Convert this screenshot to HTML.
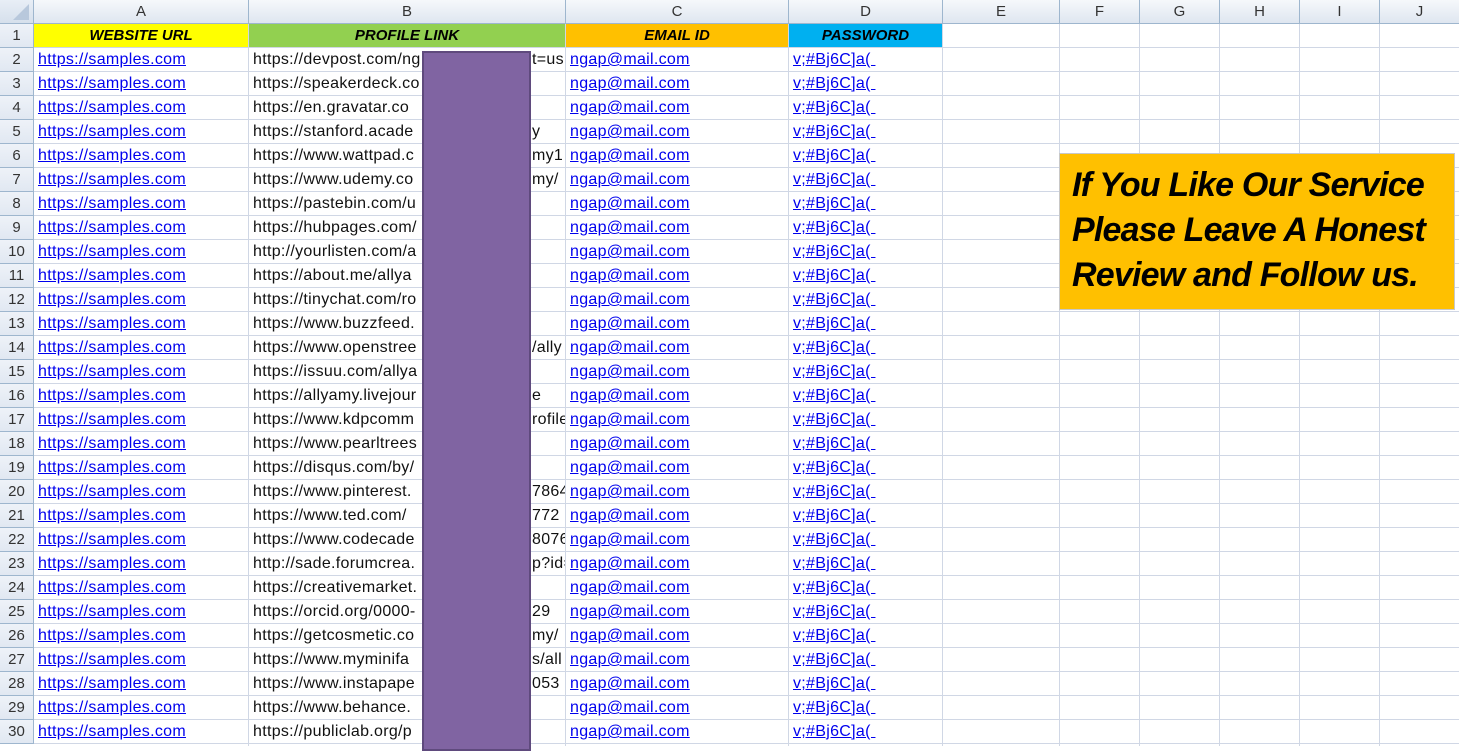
<!DOCTYPE html>
<html><head><meta charset="utf-8"><style>
*{margin:0;padding:0;box-sizing:border-box}
body{width:1459px;height:746px;overflow:hidden;background:#fff;position:relative;font-family:"Liberation Sans",sans-serif}
.grid{position:absolute;left:34px;top:24px;width:1425px;height:722px;
background-image:repeating-linear-gradient(to bottom,transparent 0 23px,#d0d7e5 23px 24px);}
.v{position:absolute;top:24px;height:722px;width:1px;background:#d0d7e5}
.hdr{position:absolute;top:0;height:24px;background:linear-gradient(#f6f8fb,#dfe6f0);border-right:1px solid #9eb6ce;border-bottom:1px solid #9eb6ce;color:#333;font-size:15px;line-height:23px;text-align:center}
.rn{position:absolute;left:0;width:34px;height:24px;background:linear-gradient(#eef2f8,#e1e8f2);border-right:1px solid #9eb6ce;border-bottom:1px solid #9eb6ce;color:#333;font-size:15px;line-height:23px;text-align:center}
.r{position:absolute;left:0;width:1459px;height:24px;font-size:16px;letter-spacing:.3px;line-height:24px;white-space:nowrap}
.r span{position:absolute}
.a{left:38px;color:#0000ee;text-decoration:underline}
.b{left:253px;color:#111}
.br{left:532px;color:#111;width:33px;overflow:hidden}
.c{left:570px;color:#0000ee;text-decoration:underline}
.d{left:793px;color:#0000ee;text-decoration:underline}
.h1{position:absolute;top:24px;height:23px;font-weight:bold;font-style:italic;font-size:15px;line-height:24px;text-align:center;color:#000}
</style></head><body>
<div class="grid"></div>
<div class="v" style="left:248px"></div><div class="v" style="left:565px"></div><div class="v" style="left:788px"></div><div class="v" style="left:942px"></div><div class="v" style="left:1059px"></div><div class="v" style="left:1139px"></div><div class="v" style="left:1219px"></div><div class="v" style="left:1299px"></div><div class="v" style="left:1379px"></div>
<div class="hdr" style="left:0;width:34px;background:linear-gradient(#e8eef6,#d6e0ec)"><svg width="33" height="23"><polygon points="29,4 29,20 13,20" fill="#b8c8dc"/></svg></div>
<div class="hdr" style="left:34px;width:215px">A</div>
<div class="hdr" style="left:249px;width:317px">B</div>
<div class="hdr" style="left:566px;width:223px">C</div>
<div class="hdr" style="left:789px;width:154px">D</div>
<div class="hdr" style="left:943px;width:117px">E</div>
<div class="hdr" style="left:1060px;width:80px">F</div>
<div class="hdr" style="left:1140px;width:80px">G</div>
<div class="hdr" style="left:1220px;width:80px">H</div>
<div class="hdr" style="left:1300px;width:80px">I</div>
<div class="hdr" style="left:1380px;width:80px">J</div>
<div class="h1" style="left:34px;width:214px;background:#ffff00">WEBSITE URL</div>
<div class="h1" style="left:249px;width:316px;background:#92d050">PROFILE LINK</div>
<div class="h1" style="left:566px;width:222px;background:#ffc000">EMAIL ID</div>
<div class="h1" style="left:789px;width:153px;background:#00b0f0">PASSWORD</div>

<div class="rn" style="top:24px">1</div><div class="rn" style="top:48px">2</div><div class="rn" style="top:72px">3</div><div class="rn" style="top:96px">4</div><div class="rn" style="top:120px">5</div><div class="rn" style="top:144px">6</div><div class="rn" style="top:168px">7</div><div class="rn" style="top:192px">8</div><div class="rn" style="top:216px">9</div><div class="rn" style="top:240px">10</div><div class="rn" style="top:264px">11</div><div class="rn" style="top:288px">12</div><div class="rn" style="top:312px">13</div><div class="rn" style="top:336px">14</div><div class="rn" style="top:360px">15</div><div class="rn" style="top:384px">16</div><div class="rn" style="top:408px">17</div><div class="rn" style="top:432px">18</div><div class="rn" style="top:456px">19</div><div class="rn" style="top:480px">20</div><div class="rn" style="top:504px">21</div><div class="rn" style="top:528px">22</div><div class="rn" style="top:552px">23</div><div class="rn" style="top:576px">24</div><div class="rn" style="top:600px">25</div><div class="rn" style="top:624px">26</div><div class="rn" style="top:648px">27</div><div class="rn" style="top:672px">28</div><div class="rn" style="top:696px">29</div><div class="rn" style="top:720px">30</div>

<div class="r" style="top:48px"><span class="a">https://samples.com</span><span class="b">https://devpost.com/ng</span><span class="br">t=us</span><span class="c">ngap@mail.com</span><span class="d">v;#Bj6C]a(&nbsp;</span></div>
<div class="r" style="top:72px"><span class="a">https://samples.com</span><span class="b">https://speakerdeck.co</span><span class="c">ngap@mail.com</span><span class="d">v;#Bj6C]a(&nbsp;</span></div>
<div class="r" style="top:96px"><span class="a">https://samples.com</span><span class="b">https://en.gravatar.co</span><span class="c">ngap@mail.com</span><span class="d">v;#Bj6C]a(&nbsp;</span></div>
<div class="r" style="top:120px"><span class="a">https://samples.com</span><span class="b">https://stanford.acade</span><span class="br">y</span><span class="c">ngap@mail.com</span><span class="d">v;#Bj6C]a(&nbsp;</span></div>
<div class="r" style="top:144px"><span class="a">https://samples.com</span><span class="b">https://www.wattpad.c</span><span class="br">my1</span><span class="c">ngap@mail.com</span><span class="d">v;#Bj6C]a(&nbsp;</span></div>
<div class="r" style="top:168px"><span class="a">https://samples.com</span><span class="b">https://www.udemy.co</span><span class="br">my/</span><span class="c">ngap@mail.com</span><span class="d">v;#Bj6C]a(&nbsp;</span></div>
<div class="r" style="top:192px"><span class="a">https://samples.com</span><span class="b">https://pastebin.com/u</span><span class="c">ngap@mail.com</span><span class="d">v;#Bj6C]a(&nbsp;</span></div>
<div class="r" style="top:216px"><span class="a">https://samples.com</span><span class="b">https://hubpages.com/</span><span class="c">ngap@mail.com</span><span class="d">v;#Bj6C]a(&nbsp;</span></div>
<div class="r" style="top:240px"><span class="a">https://samples.com</span><span class="b">http://yourlisten.com/a</span><span class="c">ngap@mail.com</span><span class="d">v;#Bj6C]a(&nbsp;</span></div>
<div class="r" style="top:264px"><span class="a">https://samples.com</span><span class="b">https://about.me/allya</span><span class="c">ngap@mail.com</span><span class="d">v;#Bj6C]a(&nbsp;</span></div>
<div class="r" style="top:288px"><span class="a">https://samples.com</span><span class="b">https://tinychat.com/ro</span><span class="c">ngap@mail.com</span><span class="d">v;#Bj6C]a(&nbsp;</span></div>
<div class="r" style="top:312px"><span class="a">https://samples.com</span><span class="b">https://www.buzzfeed.</span><span class="c">ngap@mail.com</span><span class="d">v;#Bj6C]a(&nbsp;</span></div>
<div class="r" style="top:336px"><span class="a">https://samples.com</span><span class="b">https://www.openstree</span><span class="br">/ally</span><span class="c">ngap@mail.com</span><span class="d">v;#Bj6C]a(&nbsp;</span></div>
<div class="r" style="top:360px"><span class="a">https://samples.com</span><span class="b">https://issuu.com/allya</span><span class="c">ngap@mail.com</span><span class="d">v;#Bj6C]a(&nbsp;</span></div>
<div class="r" style="top:384px"><span class="a">https://samples.com</span><span class="b">https://allyamy.livejour</span><span class="br">e</span><span class="c">ngap@mail.com</span><span class="d">v;#Bj6C]a(&nbsp;</span></div>
<div class="r" style="top:408px"><span class="a">https://samples.com</span><span class="b">https://www.kdpcomm</span><span class="br">rofile</span><span class="c">ngap@mail.com</span><span class="d">v;#Bj6C]a(&nbsp;</span></div>
<div class="r" style="top:432px"><span class="a">https://samples.com</span><span class="b">https://www.pearltrees</span><span class="c">ngap@mail.com</span><span class="d">v;#Bj6C]a(&nbsp;</span></div>
<div class="r" style="top:456px"><span class="a">https://samples.com</span><span class="b">https://disqus.com/by/</span><span class="c">ngap@mail.com</span><span class="d">v;#Bj6C]a(&nbsp;</span></div>
<div class="r" style="top:480px"><span class="a">https://samples.com</span><span class="b">https://www.pinterest.</span><span class="br">7864</span><span class="c">ngap@mail.com</span><span class="d">v;#Bj6C]a(&nbsp;</span></div>
<div class="r" style="top:504px"><span class="a">https://samples.com</span><span class="b">https://www.ted.com/</span><span class="br">772</span><span class="c">ngap@mail.com</span><span class="d">v;#Bj6C]a(&nbsp;</span></div>
<div class="r" style="top:528px"><span class="a">https://samples.com</span><span class="b">https://www.codecade</span><span class="br">8076</span><span class="c">ngap@mail.com</span><span class="d">v;#Bj6C]a(&nbsp;</span></div>
<div class="r" style="top:552px"><span class="a">https://samples.com</span><span class="b">http://sade.forumcrea.</span><span class="br">p?id=</span><span class="c">ngap@mail.com</span><span class="d">v;#Bj6C]a(&nbsp;</span></div>
<div class="r" style="top:576px"><span class="a">https://samples.com</span><span class="b">https://creativemarket.</span><span class="c">ngap@mail.com</span><span class="d">v;#Bj6C]a(&nbsp;</span></div>
<div class="r" style="top:600px"><span class="a">https://samples.com</span><span class="b">https://orcid.org/0000-</span><span class="br">29</span><span class="c">ngap@mail.com</span><span class="d">v;#Bj6C]a(&nbsp;</span></div>
<div class="r" style="top:624px"><span class="a">https://samples.com</span><span class="b">https://getcosmetic.co</span><span class="br">my/</span><span class="c">ngap@mail.com</span><span class="d">v;#Bj6C]a(&nbsp;</span></div>
<div class="r" style="top:648px"><span class="a">https://samples.com</span><span class="b">https://www.myminifa</span><span class="br">s/all</span><span class="c">ngap@mail.com</span><span class="d">v;#Bj6C]a(&nbsp;</span></div>
<div class="r" style="top:672px"><span class="a">https://samples.com</span><span class="b">https://www.instapape</span><span class="br">053</span><span class="c">ngap@mail.com</span><span class="d">v;#Bj6C]a(&nbsp;</span></div>
<div class="r" style="top:696px"><span class="a">https://samples.com</span><span class="b">https://www.behance.</span><span class="c">ngap@mail.com</span><span class="d">v;#Bj6C]a(&nbsp;</span></div>
<div class="r" style="top:720px"><span class="a">https://samples.com</span><span class="b">https://publiclab.org/p</span><span class="c">ngap@mail.com</span><span class="d">v;#Bj6C]a(&nbsp;</span></div>

<div style="position:absolute;left:422px;top:51px;width:109px;height:700px;background:#8064a2;border:2px solid #5f4a7d"></div>

<div style="position:absolute;left:1059px;top:153px;width:396px;height:157px;background:#ffc000;border:1px solid #c8c8c8;padding:9px 0 0 12px;font-family:'Liberation Sans',sans-serif;font-weight:bold;font-style:italic;font-size:34px;line-height:45px;color:#000;letter-spacing:-.8px;white-space:nowrap">If You Like Our Service<br>Please Leave A Honest<br>Review and Follow us.</div>
</body></html>
